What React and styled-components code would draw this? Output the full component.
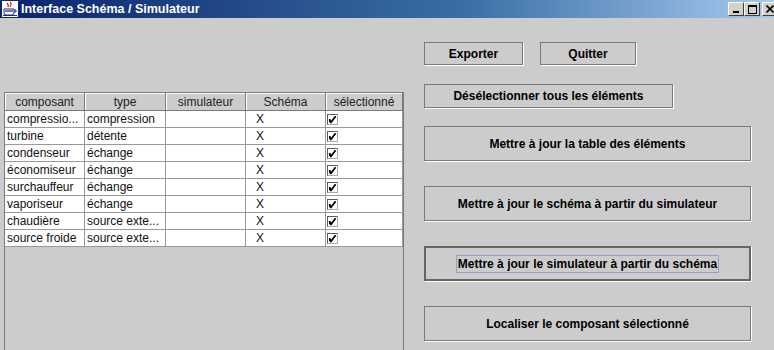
import React from "react";
import styled, { createGlobalStyle } from "styled-components";

const Global = createGlobalStyle`
  html, body { margin: 0; padding: 0; overflow: hidden; }
  body { background: #cccccc; font-family: "Liberation Sans", Arial, sans-serif; }
`;

const Frame = styled.div`
  width: 774px;
  height: 350px;
  overflow: hidden;
  background: #cccccc;
  display: flex;
  flex-direction: column;
`;

const TitleBar = styled.div`
  height: 18px;
  flex: none;
  display: flex;
  align-items: center;
  padding-left: 2px;
  background: linear-gradient(to right, #0a246a 0%, #3a6ea5 60%, #a6caf0 100%);
  overflow: hidden;
`;

const TitleText = styled.span`
  color: #fff;
  font-family: "Liberation Sans", Arial, sans-serif;
  font-weight: bold;
  font-size: 12.5px;
  margin-left: 3px;
  white-space: nowrap;
  flex: 1;
`;

const Caption = styled.div`
  display: flex;
  align-items: center;
  margin-right: -4px;
`;

const CapBtn = styled.div`
  width: 14px;
  height: 12px;
  background: #d4d0c8;
  border-top: 1px solid #fff;
  border-left: 1px solid #fff;
  border-right: 1px solid #404040;
  border-bottom: 1px solid #404040;
  margin-left: ${(p) => (p.$gap ? "2px" : "0")};
  display: flex;
  align-items: center;
  justify-content: center;
`;

const Body = styled.div`
  flex: 1;
  display: grid;
  grid-template-columns: 420px 1fr;
  min-height: 0;
`;

const LeftCol = styled.div`
  padding: 74px 0 0 4px;
`;

const ScrollPane = styled.div`
  width: 398px;
  height: 270px;
  border: 1px solid #7a7a7a;
  background: #cccccc;
`;

const COLS = "80px 81px 80px 80px 77px";

const HeaderRow = styled.div`
  display: grid;
  grid-template-columns: ${COLS};
  height: 18px;
`;

const HeaderCell = styled.div`
  box-sizing: border-box;
  border-right: 1px solid #7a7a7a;
  border-bottom: 1px solid #7a7a7a;
  box-shadow: inset 1px 1px 0 #fff;
  font-size: 12px;
  color: #222;
  display: flex;
  align-items: center;
  justify-content: center;
  white-space: nowrap;
`;

const Row = styled.div`
  display: grid;
  grid-template-columns: ${COLS};
  height: 17px;
`;

const Cell = styled.div`
  box-sizing: border-box;
  background: #fff;
  border-right: 1px solid #999;
  border-bottom: 1px solid #999;
  font-size: 12px;
  color: #111;
  display: flex;
  align-items: center;
  padding-left: ${(p) => p.$pad || "2px"};
  white-space: nowrap;
  overflow: hidden;
`;

const CheckBox = styled.div`
  box-sizing: border-box;
  width: 11px;
  height: 11px;
  border-top: 1px solid #5a5a5a;
  border-left: 1px solid #5a5a5a;
  border-right: 1px solid #aaa;
  border-bottom: 1px solid #aaa;
  background: #fff;
  display: flex;
  align-items: center;
  justify-content: center;
`;

const RightCol = styled.div`
  padding: 24px 0 0 4px;
  display: flex;
  flex-direction: column;
`;

const TopRow = styled.div`
  display: flex;
  gap: 17px;
`;

const Button = styled.button`
  box-sizing: border-box;
  width: ${(p) => p.$w}px;
  height: ${(p) => p.$h}px;
  margin: 0;
  padding: 0;
  background: #cccccc;
  border: ${(p) => (p.$focus ? "2px solid #666" : "1px solid #7a7a7a")};
  box-shadow: 1px 1px 0 #fff;
  font-family: "Liberation Sans", Arial, sans-serif;
  font-weight: bold;
  font-size: 12px;
  color: #000;
  display: flex;
  align-items: center;
  justify-content: center;
`;

const FocusLabel = styled.span`
  border: 1px solid #9a9ad0;
  padding: 1px 1px;
  line-height: 14px;
`;

const Stack = styled.div`
  display: flex;
  flex-direction: column;
  gap: 25px;
  margin-top: 18px;
`;

const SingleWrap = styled.div`
  margin-top: 19px;
`;

const rows = [
  ["compressio...", "compression"],
  ["turbine", "détente"],
  ["condenseur", "échange"],
  ["économiseur", "échange"],
  ["surchauffeur", "échange"],
  ["vaporiseur", "échange"],
  ["chaudière", "source exte..."],
  ["source froide", "source exte..."],
];

const Check = () => (
  <svg width="9" height="9" viewBox="0 0 9 9">
    <path d="M1 4 L1 7 L3 8 L8 1.5 L7 1 L3 6 L2.5 4 Z" fill="#000" />
    <path d="M1.2 4.5 L3 7.5 L7.5 1.5" stroke="#000" strokeWidth="1.4" fill="none" />
  </svg>
);

const AppIcon = () => (
  <svg width="16" height="16" viewBox="0 0 16 16">
    <rect x="0" y="0" width="16" height="16" fill="#fff" />
    <path d="M2 8 H12 V12 Q12 14 10 14 H4 Q2 14 2 12 Z" fill="#fff" stroke="#1a2a8a" strokeWidth="1" />
    <path d="M12 9 H14 V11 H12" fill="none" stroke="#1a2a8a" strokeWidth="1" />
    <rect x="3" y="9" width="8" height="2" fill="#6a7ac0" />
    <path d="M5 2 Q7 4 6 6 M8 1 Q10 3 8 6" stroke="#d02020" strokeWidth="1.2" fill="none" />
    <rect x="1" y="14" width="14" height="1" fill="#1a2a8a" />
  </svg>
);

export default function App() {
  return (
    <>
      <Global />
      <Frame>
        <TitleBar>
          <AppIcon />
          <TitleText>Interface Schéma / Simulateur</TitleText>
          <Caption>
            <CapBtn>
              <svg width="8" height="8" viewBox="0 0 8 8"><rect x="1" y="6" width="6" height="2" fill="#000" /></svg>
            </CapBtn>
            <CapBtn>
              <svg width="9" height="9" viewBox="0 0 9 9"><rect x="0.5" y="0.5" width="8" height="8" fill="none" stroke="#000" /><rect x="0" y="0" width="9" height="2" fill="#000" /></svg>
            </CapBtn>
            <CapBtn $gap>
              <svg width="8" height="8" viewBox="0 0 8 8"><path d="M0.5 0.5 L7.5 7.5 M7.5 0.5 L0.5 7.5" stroke="#000" strokeWidth="1.6" /></svg>
            </CapBtn>
          </Caption>
        </TitleBar>
        <Body>
          <LeftCol>
            <ScrollPane>
              <HeaderRow>
                <HeaderCell>composant</HeaderCell>
                <HeaderCell>type</HeaderCell>
                <HeaderCell>simulateur</HeaderCell>
                <HeaderCell>Schéma</HeaderCell>
                <HeaderCell>sélectionné</HeaderCell>
              </HeaderRow>
              {rows.map(([a, b]) => (
                <Row key={a}>
                  <Cell>{a}</Cell>
                  <Cell>{b}</Cell>
                  <Cell />
                  <Cell $pad="10px">X</Cell>
                  <Cell $pad="1px">
                    <CheckBox>
                      <Check />
                    </CheckBox>
                  </Cell>
                </Row>
              ))}
            </ScrollPane>
          </LeftCol>
          <RightCol>
            <TopRow>
              <Button $w={99} $h={23}>Exporter</Button>
              <Button $w={96} $h={23}>Quitter</Button>
            </TopRow>
            <SingleWrap>
              <Button $w={249} $h={24}>Désélectionner tous les éléments</Button>
            </SingleWrap>
            <Stack>
              <Button $w={327} $h={35}>Mettre à jour la table des éléments</Button>
              <Button $w={327} $h={35}>Mettre à jour le schéma à partir du simulateur</Button>
              <Button $w={327} $h={35} $focus>
                <FocusLabel>Mettre à jour le simulateur à partir du schéma</FocusLabel>
              </Button>
              <Button $w={327} $h={35}>Localiser le composant sélectionné</Button>
            </Stack>
          </RightCol>
        </Body>
      </Frame>
    </>
  );
}
